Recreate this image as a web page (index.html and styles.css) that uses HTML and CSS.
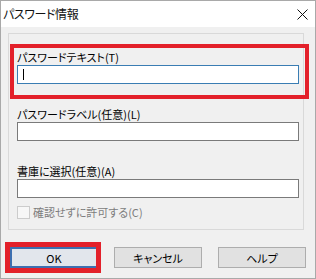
FILE: index.html
```html
<!DOCTYPE html>
<html lang="ja">
<head>
<meta charset="utf-8">
<link rel="stylesheet" href="styles.css">
</head>
<body>
<div class="window">
  <div class="titlebar">
    <span class="title">パスワード情報</span>
    <svg class="close" width="11" height="11" viewBox="0 0 11 11"><path d="M0.5 0.5 L10.5 10.5 M10.5 0.5 L0.5 10.5" stroke="#111" stroke-width="1" fill="none"/></svg>
  </div>
  <div class="content">
    <div class="panel">
      <div class="field first">
        <label class="label">パスワードテキスト(T)</label>
        <div class="textbox focused"><span class="caret"></span></div>
      </div>
      <div class="field">
        <label class="label">パスワードラベル(任意)(L)</label>
        <div class="textbox"></div>
      </div>
      <div class="field">
        <label class="label">書庫に選択(任意)(A)</label>
        <div class="textbox"></div>
      </div>
      <div class="check-row">
        <span class="checkbox"></span>
        <span class="check-label">確認せずに許可する(C)</span>
      </div>
    </div>
    <div class="buttons">
      <div class="button default">OK</div>
      <div class="button">キャンセル</div>
      <div class="button">ヘルプ</div>
    </div>
  </div>
  <div class="mark mark-field"></div>
  <div class="mark mark-ok"></div>
</div>
</body>
</html>
```
FILE: styles.css
```css
html, body {
  margin: 0;
  padding: 0;
  background: #f0f0f0;
}
body {
  font-family: "Noto Sans CJK JP", "Noto Sans", sans-serif;
  font-size: 11px;
  font-feature-settings: "palt";
  color: #000;
}
.window {
  position: relative;
  box-sizing: border-box;
  width: 316px;
  height: 279px;
  border: 1px solid #a9a9a9;
  background: #f0f0f0;
}
.titlebar {
  height: 26px;
  background: #fff;
  display: flex;
  align-items: center;
  justify-content: space-between;
  padding-left: 2px;
  padding-right: 7px;
}
.title {
  font-size: 12px;
  letter-spacing: -0.4px;
  line-height: 14px;
  color: #111;
}
.close {
  display: block;
}
.content {
  padding: 6px 0 0 7px;
}
.panel {
  box-sizing: border-box;
  width: 296px;
  height: 197px;
  border: 1px solid #d9d9d9;
  padding: 16px 0 0 8px;
}
.field {
  margin-top: 23px;
}
.field.first {
  margin-top: 0;
}
.label {
  display: block;
  height: 14px;
  line-height: 14px;
  margin-bottom: 1px;
}
.textbox {
  box-sizing: border-box;
  width: 282px;
  height: 19px;
  border: 1px solid #7a7a7a;
  background: #fff;
  display: flex;
  align-items: center;
  padding-left: 5px;
}
.textbox.focused {
  border-color: #3a7db3;
}
.caret {
  display: block;
  width: 1px;
  height: 11px;
  background: #000;
}
.check-row {
  margin-top: 8px;
  display: flex;
  align-items: center;
  gap: 3px;
  height: 13px;
}
.checkbox {
  box-sizing: border-box;
  width: 13px;
  height: 13px;
  border: 1px solid #cccccc;
  background: #f7f7f7;
}
.check-label {
  color: #7d7d7d;
  line-height: 13px;
}
.buttons {
  display: flex;
  gap: 16px;
  margin-top: 17px;
  padding-left: 2px;
}
.button {
  box-sizing: border-box;
  width: 88px;
  height: 21px;
  border: 1px solid #adadad;
  background: #e1e1e1;
  display: flex;
  align-items: center;
  justify-content: center;
  line-height: 14px;
}
.button.default {
  border: 2px solid #3d6fb0;
  background: #e2e6ec;
}
.mark {
  position: absolute;
  box-sizing: border-box;
  border-style: solid;
  border-color: #e3202a;
}
.mark-field {
  left: 9px;
  top: 43px;
  width: 299px;
  height: 55px;
  border-width: 4px;
}
.mark-ok {
  left: 4px;
  top: 241px;
  width: 96px;
  height: 31px;
  border-width: 5px;
}
```
